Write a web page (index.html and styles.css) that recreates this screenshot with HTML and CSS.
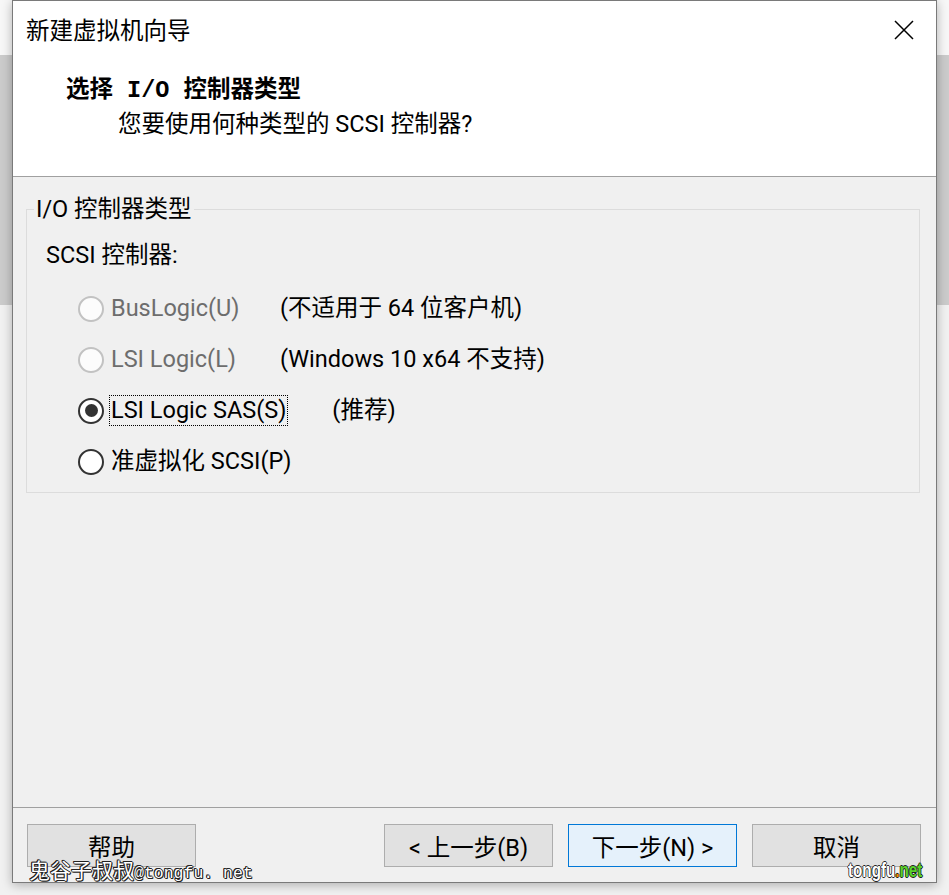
FILE: index.html
```html
<!DOCTYPE html>
<html lang="zh-CN">
<head>
<meta charset="utf-8">
<title>新建虚拟机向导</title>
<link rel="stylesheet" href="styles.css">
</head>
<body>
<div class="dialog">
  <div class="top">
    <div class="titlebar">
      <span class="title">新建虚拟机向导</span>
      <svg class="close" width="20" height="20" viewBox="0 0 20 20"><path d="M1 1L19 19M19 1L1 19" stroke="#000" stroke-width="1.5" fill="none"/></svg>
    </div>
    <div class="head">
      <div class="h1">选择 I/O 控制器类型</div>
      <div class="h2">您要使用何种类型的 SCSI 控制器?</div>
    </div>
  </div>
  <div class="main">
    <fieldset class="group">
      <legend>I/O 控制器类型</legend>
      <div class="sub">SCSI 控制器:</div>
      <div class="options">
        <div class="opt disabled"><span class="radio"></span><span class="lbl">BusLogic(U)</span><span class="desc">(不适用于 64 位客户机)</span></div>
        <div class="opt disabled"><span class="radio"></span><span class="lbl">LSI Logic(L)</span><span class="desc">(Windows 10 x64 不支持)</span></div>
        <div class="opt"><span class="radio checked"></span><span class="lbl focus">LSI Logic SAS(S)</span><span class="desc rec">(推荐)</span></div>
        <div class="opt"><span class="radio"></span><span class="lbl">准虚拟化 SCSI(P)</span></div>
      </div>
    </fieldset>
  </div>
  <div class="footer">
    <button class="btn">帮助</button>
    <div class="nav">
      <button class="btn">&lt; 上一步(B)</button>
      <button class="btn default">下一步(N) &gt;</button>
      <button class="btn">取消</button>
    </div>
  </div>
  <div class="wm1"><span class="wmc">鬼谷子叔叔</span><span class="wml">@tongfu. net</span></div>
  <div class="wm2">tongfu<span class="dot">.</span><span class="net">net</span></div>
</div>
</body>
</html>
```
FILE: styles.css
```css
html, body {
  margin: 0;
  padding: 0;
}
body {
  width: 949px;
  height: 895px;
  overflow: hidden;
  background: linear-gradient(to bottom, #f7f7f7 0, #f7f7f7 55px, #cbcbcb 55px, #cbcbcb 305px, #f1f1f1 305px);
  font-family: Roboto, "Noto Sans CJK SC", sans-serif;
  font-size: 23.5px;
  color: #000;
}
.dialog {
  position: relative;
  margin-left: 12px;
  width: 925px;
  height: 883px;
  box-sizing: border-box;
  border: 1px solid #7a7a7a;
  background: #f0f0f0;
  display: flex;
  flex-direction: column;
  box-shadow: 0 2px 10px rgba(0,0,0,0.28);
}
.top {
  height: 176px;
  box-sizing: border-box;
  background: #fff;
  border-bottom: 1px solid #a0a0a0;
}
.titlebar {
  height: 58px;
  display: flex;
  align-items: center;
  justify-content: space-between;
  padding: 0 22px 0 13px;
}
.title {
  font-family: "Noto Sans CJK SC", sans-serif;
  font-size: 23.5px;
  line-height: 30px;
  margin-top: -2px;
}
.close {
  display: block;
  margin-top: -1px;
}
.head {
  padding-top: 16px;
}
.h1 {
  padding-left: 53px;
  font-family: "Liberation Mono", "Noto Sans CJK SC", monospace;
  font-weight: 700;
  font-size: 23.5px;
  line-height: 32px;
}
.h2 {
  padding-left: 105px;
  margin-top: 1px;
  line-height: 32px;
}
.main {
  flex: 1;
}
.group {
  margin: 18px 16px 0 13px;
  padding: 0 7px 5px;
  width: 894px;
  box-sizing: border-box;
  border: 1px solid #dcdcdc;
  min-width: 0;
}
.group legend {
  padding: 0 2px;
  line-height: 28px;
}
.sub {
  margin: 18px 0 0 12px;
  line-height: 28px;
}
.options {
  margin-top: 14px;
}
.opt {
  height: 51px;
  display: flex;
  align-items: center;
  padding-left: 44px;
}
.radio {
  width: 26px;
  height: 26px;
  box-sizing: border-box;
  border-radius: 50%;
  border: 2px solid #333;
  background: #fff;
  display: flex;
  align-items: center;
  justify-content: center;
  flex: none;
}
.radio.checked::after {
  content: "";
  width: 13px;
  height: 13px;
  border-radius: 50%;
  background: #333;
}
.disabled .radio {
  border-color: #c2c2c2;
  background: #fcfcfc;
}
.lbl {
  margin-left: 5px;
  padding: 0 1px;
  border: 1px dotted transparent;
  width: 171px;
  box-sizing: border-box;
  line-height: 29px;
  white-space: nowrap;
}
.lbl.focus {
  width: auto;
  border-color: #000;
}
.disabled .lbl {
  color: #6d6d6d;
}
.desc {
  white-space: nowrap;
  line-height: 29px;
}
.desc.rec {
  margin-left: 44px;
}
.footer {
  height: 75px;
  box-sizing: border-box;
  border-top: 1px solid #a0a0a0;
  padding: 16px 15px 0 14px;
  display: flex;
  justify-content: space-between;
  align-items: flex-start;
}
.nav {
  display: flex;
  gap: 15px;
}
.btn {
  width: 169px;
  height: 43px;
  box-sizing: border-box;
  border: 1px solid #adadad;
  background: #e1e1e1;
  font-family: Roboto, "Noto Sans CJK SC", sans-serif;
  font-size: 23.5px;
  color: #000;
  padding: 0;
  margin: 0;
}
.btn.default {
  border-color: #0078d7;
  background: #e5f1fb;
}
.wm1 {
  position: absolute;
  left: 16px;
  top: 856px;
  line-height: 24px;
  color: #fff;
  white-space: nowrap;
  text-shadow: 1px 0 0 #222, -1px 0 0 #222, 0 1px 0 #222, 0 -1px 0 #222, 1px 1px 0 #222, -1px -1px 0 #222;
}
.wmc {
  font-family: "Noto Sans CJK SC", sans-serif;
  font-size: 21px;
}
.wml {
  font-family: "Liberation Mono", monospace;
  font-size: 16.5px;
}
.wm2 {
  position: absolute;
  left: 835px;
  top: 858px;
  font-family: "Liberation Sans", sans-serif;
  font-weight: 700;
  font-size: 20px;
  line-height: 22px;
  color: #fff;
  white-space: nowrap;
  transform: scaleX(0.76);
  transform-origin: left center;
  text-shadow: 1px 0 0 #222, -1px 0 0 #222, 0 1px 0 #222, 0 -1px 0 #222;
}
.wm2 .dot {
  color: #f08a00;
}
.wm2 .net {
  color: #5ad22a;
}
```
